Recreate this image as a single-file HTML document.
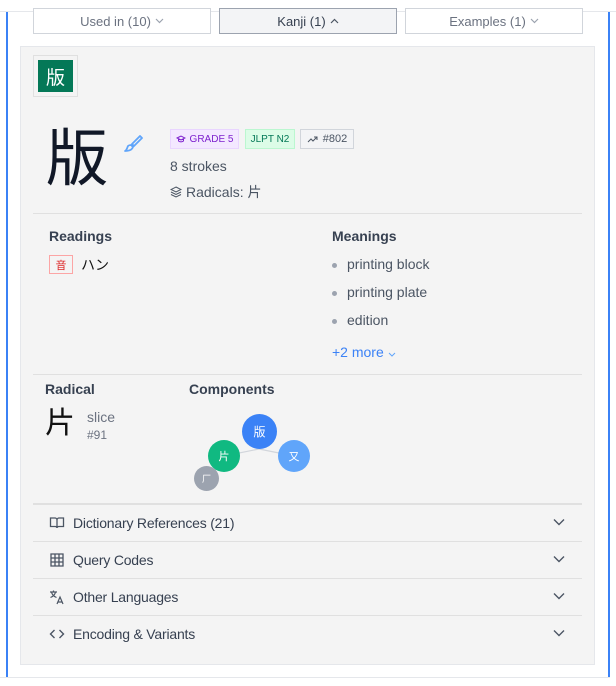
<!DOCTYPE html>
<html><head><meta charset="utf-8"><style>
*{box-sizing:border-box;margin:0;padding:0}
body{width:616px;height:686px;background:#fff;position:relative;overflow:hidden;font-family:"Liberation Sans","Noto Sans CJK JP",sans-serif;color:#374151}
.a{position:absolute}
.btn{position:absolute;top:8px;height:26px;border:1px solid #d1d5db;background:#fff;font-size:13px;color:#6b7280;display:flex;align-items:center;justify-content:center;gap:4px}
.row{position:absolute;left:33px;width:549px;height:37px;border-top:1px solid #e0e0e0;display:flex;align-items:center;font-size:14px;color:#374151;letter-spacing:-0.2px}
.row svg.i{margin-left:16px;margin-right:8px}
.row .ch{position:absolute;right:17px;top:13px}
.tag{position:absolute;top:129px;height:20px;font-size:10px;display:flex;align-items:center;justify-content:center}
.li{position:absolute;left:332px;font-size:14px;color:#4b5563}
.li:before{content:"";position:absolute;left:0;top:7px;width:5px;height:5px;border-radius:50%;background:#9ca3af}
.li span{margin-left:15px}
.c{position:absolute;border-radius:50%;color:#fff;font-size:11px;display:flex;align-items:center;justify-content:center}
</style></head><body>
<div class="a" style="left:0;top:0;width:616px;height:12px;border-bottom:1px solid #e5e7eb"></div>
<div class="a" style="left:6px;top:12px;width:2px;height:665px;background:#3b82f6"></div>
<div class="a" style="left:608px;top:12px;width:2px;height:665px;background:#3b82f6"></div>
<div class="a" style="left:0;top:677px;width:610px;height:1px;background:#e5e7eb"></div>

<div class="btn" style="left:33px;width:178px">Used in (10) <svg width="9" height="6" viewBox="0 0 9 6"><path d="M1 1l3.5 3.5L8 1" fill="none" stroke="#9ca3af" stroke-width="1.2"/></svg></div>
<div class="btn" style="left:219px;width:178px;background:#f3f4f6;border-color:#9ca3af;color:#374151">Kanji (1) <svg width="9" height="6" viewBox="0 0 9 6"><path d="M1 5l3.5-3.5L8 5" fill="none" stroke="#4b5563" stroke-width="1.2"/></svg></div>
<div class="btn" style="left:405px;width:178px">Examples (1) <svg width="9" height="6" viewBox="0 0 9 6"><path d="M1 1l3.5 3.5L8 1" fill="none" stroke="#9ca3af" stroke-width="1.2"/></svg></div>

<div class="a" style="left:20px;top:46px;width:575px;height:619px;background:#f4f4f4;border:1px solid #e5e7eb"></div>
<div class="a" style="left:33px;top:55px;width:45px;height:42px;border:1px solid #e0e0e0"></div>
<div class="a" style="left:38px;top:60px;width:35px;height:32px;background:#047857;color:#fff;font-size:19px;display:flex;align-items:center;justify-content:center">版</div>

<div class="a" style="left:46px;top:124px;font-size:62px;line-height:72px;color:#111827">版</div>
<svg class="a" style="left:122px;top:134px" width="22" height="20" viewBox="0 0 22 20"><path d="M18 2l2 2-8 8-2-2z M9 11l2 2c-1 3-4 4-8 4 2-1 2-3 3-5 1-1 2-1 3-1z" fill="none" stroke="#60a5fa" stroke-width="1.8" stroke-linejoin="round"/></svg>
<div class="tag" style="left:170px;width:69px;background:#f3e8ff;border:1px solid #e9d5ff;color:#7e22ce"><svg width="10" height="8" viewBox="0 0 10 8" style="margin-right:4px"><path d="M1 3l4-2 4 2-4 2z M2.5 4v2c1.5 1 3.5 1 5 0V4" fill="none" stroke="#7e22ce" stroke-width="1"/></svg>GRADE 5</div>
<div class="tag" style="left:245px;width:50px;background:#dcfce7;border:1px solid #bbf7d0;color:#047857">JLPT N2</div>
<div class="tag" style="left:300px;width:54px;background:#f3f4f6;border:1px solid #d1d5db;color:#4b5563;font-size:11px"><svg width="12" height="8" viewBox="0 0 12 8" style="margin-right:4px"><path d="M1 7l3-3 2 2 4-4M7 2h3v3" fill="none" stroke="#4b5563" stroke-width="1"/></svg>#802</div>
<div class="a" style="left:170px;top:158px;font-size:14px;color:#4b5563">8 strokes</div>
<div class="a" style="left:170px;top:182px;font-size:14px;color:#4b5563;display:flex;align-items:center"><svg width="12" height="12" viewBox="0 0 12 12" style="margin-right:4px"><path d="M6 1l5 2.5-5 2.5-5-2.5z M1 6l5 2.5 5-2.5 M1 8.5l5 2.5 5-2.5" fill="none" stroke="#4b5563" stroke-width="1"/></svg>Radicals: 片</div>

<div class="a" style="left:33px;top:213px;width:549px;height:1px;background:#e0e0e0"></div>
<div class="a" style="left:49px;top:228px;font-size:14px;font-weight:bold;color:#374151">Readings</div>
<div class="a" style="left:49px;top:255px;width:24px;height:19px;border:1px solid #fca5a5;color:#dc2626;font-size:11px;display:flex;align-items:center;justify-content:center">音</div>
<div class="a" style="left:81px;top:255px;font-size:14px;color:#111">ハン</div>
<div class="a" style="left:332px;top:228px;font-size:14px;font-weight:bold;color:#374151">Meanings</div>
<div class="li" style="top:256px"><span>printing block</span></div>
<div class="li" style="top:284px"><span>printing plate</span></div>
<div class="li" style="top:312px"><span>edition</span></div>
<div class="a" style="left:332px;top:344px;font-size:14px;color:#3b82f6">+2 more <svg width="8" height="5" viewBox="0 0 8 5"><path d="M1 1l3 3 3-3" fill="none" stroke="#60a5fa" stroke-width="1"/></svg></div>

<div class="a" style="left:33px;top:374px;width:549px;height:1px;background:#e0e0e0"></div>
<div class="a" style="left:45px;top:381px;font-size:14px;font-weight:bold">Radical</div>
<div class="a" style="left:45px;top:404px;font-size:30px;color:#111;line-height:40px">片</div>
<div class="a" style="left:87px;top:409px;font-size:14px;color:#6b7280">slice</div>
<div class="a" style="left:87px;top:428px;font-size:12px;color:#6b7280">#91</div>
<div class="a" style="left:189px;top:381px;font-size:14px;font-weight:bold">Components</div>
<svg class="a" style="left:190px;top:410px" width="130" height="80"><path d="M34 46L69 39L104 46" fill="none" stroke="#d1d5db" stroke-width="1.2"/></svg>
<div class="c" style="left:242px;top:414px;width:35px;height:35px;background:#3b82f6;font-size:12px">版</div>
<div class="c" style="left:208px;top:440px;width:32px;height:32px;background:#10b981">片</div>
<div class="c" style="left:278px;top:440px;width:32px;height:32px;background:#60a5fa">又</div>
<div class="c" style="left:194px;top:466px;width:25px;height:25px;background:#9ca3af;font-size:9px">厂</div>

<div class="a" style="left:33px;top:503px;width:549px;height:2px;background:#e0e0e0"></div>
<div class="row" style="top:505px;height:36px;border-top:none"><svg class="i" width="16" height="16" viewBox="0 0 16 16"><path d="M1.5 3h4.5c1 0 2 .8 2 2v8c0-.8-.8-1.5-1.8-1.5H1.5z M14.5 3H10c-1 0-2 .8-2 2v8c0-.8.8-1.5 1.8-1.5h4.7z" fill="none" stroke="#4b5563" stroke-width="1.3"/></svg>Dictionary References (21)<svg class="ch" width="12" height="8" viewBox="0 0 12 8"><path d="M1 1.5l5 5 5-5" fill="none" stroke="#4b5563" stroke-width="1.4"/></svg></div>
<div class="row" style="top:541px"><svg class="i" width="16" height="16" viewBox="0 0 16 16"><path d="M2 2h12v12H2z M2 6h12M2 10h12M6 2v12M10 2v12" fill="none" stroke="#4b5563" stroke-width="1.3"/></svg>Query Codes<svg class="ch" width="12" height="8" viewBox="0 0 12 8"><path d="M1 1.5l5 5 5-5" fill="none" stroke="#4b5563" stroke-width="1.4"/></svg></div>
<div class="row" style="top:578px"><svg class="i" width="16" height="16" viewBox="0 0 16 16"><path d="M1 3h7M4.5 1.5V3M2.5 3c.5 2.5 2.5 4.5 5 5.5M6.5 3c-.5 2.5-2.5 4.5-5 5.5M8 15l3-7 3 7M9 13h4" fill="none" stroke="#4b5563" stroke-width="1.2"/></svg>Other Languages<svg class="ch" width="12" height="8" viewBox="0 0 12 8"><path d="M1 1.5l5 5 5-5" fill="none" stroke="#4b5563" stroke-width="1.4"/></svg></div>
<div class="row" style="top:615px"><svg class="i" width="16" height="16" viewBox="0 0 16 16"><path d="M5.5 4L1.5 8l4 4M10.5 4l4 4-4 4" fill="none" stroke="#4b5563" stroke-width="1.4"/></svg>Encoding &amp; Variants<svg class="ch" width="12" height="8" viewBox="0 0 12 8"><path d="M1 1.5l5 5 5-5" fill="none" stroke="#4b5563" stroke-width="1.4"/></svg></div>
</body></html>
